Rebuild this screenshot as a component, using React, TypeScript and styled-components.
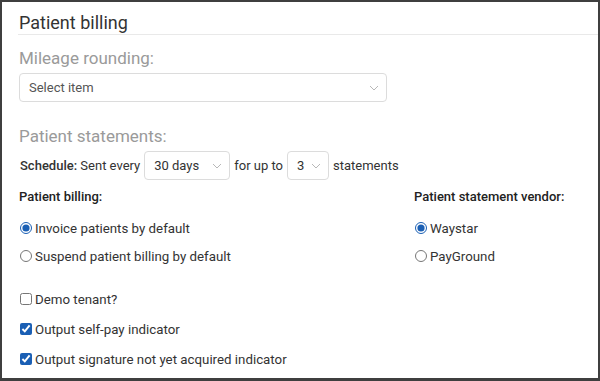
import React from "react";
import styled, { createGlobalStyle } from "styled-components";

const GlobalStyle = createGlobalStyle`
  html, body {
    margin: 0;
    padding: 0;
    background: #ffffff;
  }
  body {
    font-family: Roboto, "Liberation Sans", Arial, sans-serif;
    color: #333;
  }
`;

//=============FRAME===========================
const Frame = styled.div`
  box-sizing: border-box;
  width: 600px;
  height: 381px;
  border: 2px solid #3f3f3f;
  border-bottom-width: 3px;
  padding: 0 0 0 16px;
  overflow: hidden;
  background: #fff;
`;

const Title = styled.h2`
  margin: 0;
  padding: 11px 0 1px 1px;
  font-size: 18px;
  font-weight: 400;
  line-height: 20px;
  color: #333;
  border-bottom: 1px solid #e9e9e9;
`;

const SectionLabel = styled.div<{ top: number }>`
  margin-top: ${({ top }) => top}px;
  padding-left: 1px;
  font-size: 17px;
  line-height: 20px;
  color: #9a9a9a;
`;

//=============SELECTS===========================
const SelectBox = styled.div<{ width: number }>`
  box-sizing: border-box;
  width: ${({ width }) => width}px;
  height: 29px;
  display: flex;
  align-items: center;
  justify-content: space-between;
  padding: 0 7px 0 9px;
  border: 1px solid #dcdcdc;
  border-radius: 4px;
  font-size: 13px;
  color: #333;
  background: #fff;
`;

const Placeholder = styled.span`
  color: #555;
`;

const WideSelect = styled(SelectBox)`
  margin-top: 5px;
  margin-left: 1px;
`;

function Chevron() {
  return (
    <svg width="10" height="6" viewBox="0 0 10 6" fill="none">
      <path d="M1 1l4 4 4-4" stroke="#b8b8b8" strokeWidth="1" />
    </svg>
  );
}

//=============SCHEDULE===========================
const ScheduleRow = styled.div`
  display: flex;
  align-items: center;
  gap: 4px;
  margin-top: 5px;
  padding-left: 2px;
  font-size: 13px;
  color: #333;
`;

const Strong = styled.span`
  font-weight: 500;
`;

//=============OPTIONS===========================
const Columns = styled.div`
  display: grid;
  grid-template-columns: 395px 1fr;
  margin-top: 9px;
`;

const GroupLabel = styled.div`
  padding-left: 1px;
  font-size: 13px;
  font-weight: 500;
  line-height: 16px;
  color: #222;
  margin-bottom: 9px;
`;

const OptionRow = styled.label`
  display: flex;
  align-items: center;
  gap: 3px;
  height: 28px;
  font-size: 13.3px;
  color: #333;
  input {
    margin: 0 0 0 2px;
    width: 12px;
    height: 12px;
    accent-color: #1a5fb4;
  }
`;

const Checks = styled.div`
  margin-top: 15px;
  display: flex;
  flex-direction: column;
  gap: 2px;
`;

export default function App() {
  return (
    <>
      <GlobalStyle />
      <Frame>
        <Title>Patient billing</Title>

        <SectionLabel top={13}>Mileage rounding:</SectionLabel>
        <WideSelect width={368}>
          <Placeholder>Select item</Placeholder>
          <Chevron />
        </WideSelect>

        <SectionLabel top={24}>Patient statements:</SectionLabel>
        <ScheduleRow>
          <span>
            <Strong>Schedule:</Strong> Sent every
          </span>
          <SelectBox width={86}>
            <span>30 days</span>
            <Chevron />
          </SelectBox>
          <span>for up to</span>
          <SelectBox width={42}>
            <span>3</span>
            <Chevron />
          </SelectBox>
          <span>statements</span>
        </ScheduleRow>

        <Columns>
          <div>
            <GroupLabel>Patient billing:</GroupLabel>
            <OptionRow>
              <input type="radio" name="billing" defaultChecked />
              Invoice patients by default
            </OptionRow>
            <OptionRow>
              <input type="radio" name="billing" />
              Suspend patient billing by default
            </OptionRow>
          </div>
          <div>
            <GroupLabel>Patient statement vendor:</GroupLabel>
            <OptionRow>
              <input type="radio" name="vendor" defaultChecked />
              Waystar
            </OptionRow>
            <OptionRow>
              <input type="radio" name="vendor" />
              PayGround
            </OptionRow>
          </div>
        </Columns>

        <Checks>
          <OptionRow>
            <input type="checkbox" />
            Demo tenant?
          </OptionRow>
          <OptionRow>
            <input type="checkbox" defaultChecked />
            Output self-pay indicator
          </OptionRow>
          <OptionRow>
            <input type="checkbox" defaultChecked />
            Output signature not yet acquired indicator
          </OptionRow>
        </Checks>
      </Frame>
    </>
  );
}
